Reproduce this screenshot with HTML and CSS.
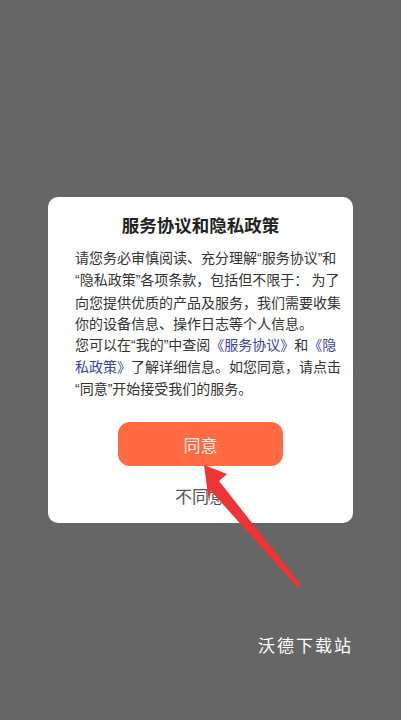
FILE: index.html
```html
<!DOCTYPE html>
<html lang="zh-CN">
<head>
<meta charset="utf-8">
<link rel="stylesheet" href="styles.css">
</head>
<body>
<div class="screen">
  <div class="card">
    <h1 class="title">服务协议和隐私政策</h1>
    <p class="body">请您务必审慎阅读、充分理解<span class="q">“</span>服务协议<span class="q">”</span>和<br><span class="q">“</span>隐私政策<span class="q">”</span>各项条款，包括但不限于： 为了<br>向您提供优质的产品及服务，我们需要收集<br>你的设备信息、操作日志等个人信息。<br>您可以在<span class="q">“</span>我的<span class="q">”</span>中查阅<span class="link">《服务协议》</span>和<span class="link">《隐<br>私政策》</span>了解详细信息。如您同意，请点击<br><span class="q">“</span>同意<span class="q">”</span>开始接受我们的服务。</p>
    <button class="agree">同意</button>
    <div class="disagree">不同意</div>
  </div>
  <svg class="arrow" width="401" height="720" viewBox="0 0 401 720">
    <polygon points="204,465 227,474 219,481 301,585 297,587 211,491 209,502" fill="#ee3434"/>
  </svg>
  <div class="mark">沃德下载站</div>
</div>
</body>
</html>
```
FILE: styles.css
```css
html, body {
  margin: 0;
  padding: 0;
}
body {
  background: #666666;
  font-family: "Noto Sans CJK SC", "Noto Sans", sans-serif;
}
.screen {
  position: relative;
  width: 401px;
  height: 720px;
  display: flex;
  align-items: center;
  justify-content: center;
  overflow: hidden;
}
.card {
  width: 305px;
  box-sizing: border-box;
  background: #ffffff;
  border-radius: 10px;
  padding: 15px 0 15px 0;
  display: flex;
  flex-direction: column;
  align-items: center;
}
.title {
  margin: 0;
  font-size: 17.5px;
  line-height: 26px;
  font-weight: 700;
  color: #222222;
}
.body {
  margin: 9px 0 0 0;
  align-self: stretch;
  padding-left: 27px;
  font-size: 14px;
  line-height: 21.3px;
  color: #333333;
  white-space: nowrap;
}
.q {
  font-family: "Liberation Sans", sans-serif;
}
.link {
  color: #3b3fa8;
}
.agree {
  margin-top: 22px;
  width: 165px;
  height: 44px;
  border: none;
  border-radius: 12px;
  background: #ff6a42;
  color: #fdeee6;
  font-family: inherit;
  font-size: 17px;
  padding: 0;
}
.disagree {
  margin-top: 18px;
  font-size: 17px;
  line-height: 24px;
  color: #555555;
}
.arrow {
  position: absolute;
  left: 0;
  top: 0;
  pointer-events: none;
}
.mark {
  position: absolute;
  left: 258px;
  top: 633px;
  color: #ffffff;
  font-size: 17px;
  line-height: 24px;
  letter-spacing: 2px;
}
```
